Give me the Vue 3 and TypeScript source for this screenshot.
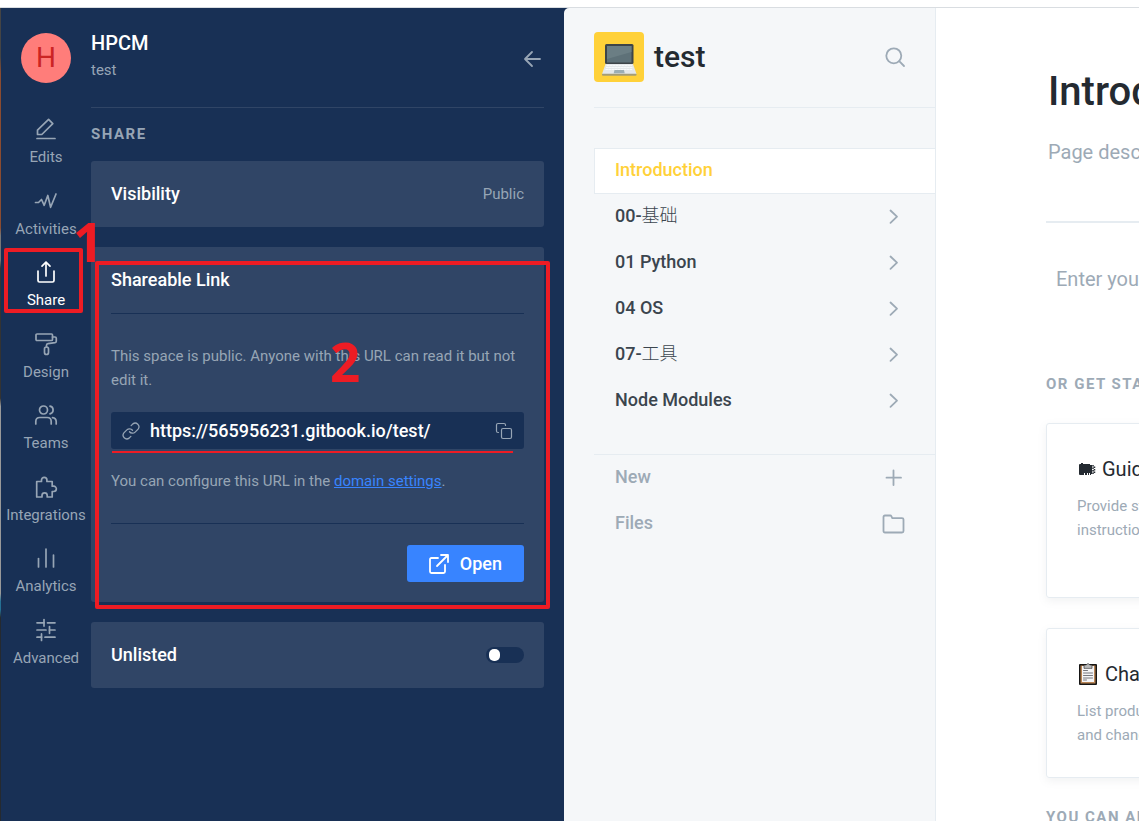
<script setup lang="ts">
import { ref } from 'vue'

interface RailItem {
  label: string
  paths: string[]
  active?: boolean
}

interface Page {
  name: string
  cjk?: string
}

const railItems: RailItem[] = [
  { label: 'Edits', paths: ['M3 21.500h18', 'M3.500 17.500v-4.300L14.600 2.400l4.200 4.200L7.800 17.500z'] },
  { label: 'Activities', paths: ['M1.500 13.500h3l3-3 2.700 5.800 3.600-9.800 2.800 11.800L22 5'] },
  { label: 'Share', active: true, paths: ['M12 16V2.500', 'M8 6.200l4-4 4 4', 'M4 11v9.500q0 1.500 1.500 1.500h13q1.500 0 1.500-1.500V11'] },
  {
    label: 'Design',
    paths: [
      'M3 2h14.500q1 0 1 1v4.500q0 1-1 1H3q-1 0-1-1V3q0-1 1-1z',
      'M18.500 5H21q1.300 0 1.300 1.300v2.900q0 1.300-1.300 1.500l-7 .9q-1.500.2-1.500 1.600v1.600',
      'M12.500 15q2 0 2 2v3.500q0 2-2 2t-2-2V17q0-2 2-2z',
    ],
  },
  {
    label: 'Teams',
    paths: [
      'M9.500 3a4 4 0 1 1 0 8 4 4 0 0 1 0-8z',
      'M1.800 21v-2.500q0-4 4-4h7.400q4 0 4 4V21',
      'M16 3.100a4 4 0 0 1 0 7.800',
      'M18.500 14.600q3.700.5 3.700 4V21',
    ],
  },
  {
    label: 'Integrations',
    paths: [
      'M2.700 6.500h4.800V5a2.700 2.700 0 0 1 5.400 0v1.500h5.300v4.700h1.500a2.500 2.500 0 0 1 0 5.300h-1.500V22h-5v-1.500a2.500 2.500 0 0 0-5.200 0V22H2.700z',
    ],
  },
  { label: 'Analytics', paths: ['M4.500 21v-8.500', 'M12 21V3', 'M19.500 21V9'] },
  {
    label: 'Advanced',
    paths: ['M3 4.800h7', 'M10 1.500v6.600', 'M13.500 4.800H21', 'M3 12h9', 'M15.500 8.700v6.600', 'M15.500 12H21', 'M3 19.200h4.500', 'M7.500 15.900v6.600', 'M11 19.200h10'],
  },
]

const pages: Page[] = [
  { name: '00-', cjk: '基础' },
  { name: '01 Python' },
  { name: '04 OS' },
  { name: '07-', cjk: '工具' },
  { name: 'Node Modules' },
]
const url = ref('https://565956231.gitbook.io/test/')
const unlisted = ref(false)
const description = ref('')
const body = ref('')
</script>

<template>
  <div class="window">
    <div class="topbar"></div>
    <div class="shell">
      <div class="edge"></div>

      <aside class="dock">
        <div class="rail">
          <div class="avatar">H</div>
          <nav class="rail-nav" aria-label="Space">
            <button
              v-for="item in railItems"
              :key="item.label"
              type="button"
              class="rail-item"
              :class="{ active: item.active }"
            >
              <svg class="rail-icon" viewBox="0 0 24 24" aria-hidden="true">
                <path v-for="d in item.paths" :key="d" :d="d" />
              </svg>
              <span>{{ item.label }}</span>
            </button>
          </nav>
        </div>

        <div class="panel">
          <header class="panel-head">
            <div>
              <h2 class="org">HPCM</h2>
              <p class="space">test</p>
            </div>
            <button type="button" class="icon-btn back" aria-label="Back">
              <svg width="24" height="24" viewBox="0 0 24 24"><path d="M20 12H5.500M12 5l-7 7 7 7" /></svg>
            </button>
          </header>

          <h3 class="section">Share</h3>

          <div class="cards">
            <section class="card row">
              <h4>Visibility</h4>
              <span class="value">Public</span>
            </section>

            <section class="card">
              <h4 id="link-title" class="card-title">Shareable Link</h4>
              <div class="card-body">
                <p>This space is public. Anyone with this URL can read it but not edit it.</p>
                <div class="url-box">
                  <svg class="link-icon" width="18" height="18" viewBox="0 0 24 24" aria-hidden="true">
                    <path d="M10 13a5 5 0 0 0 7.500.5l4-4a5 5 0 0 0-7-7l-2.300 2.300" />
                    <path d="M14 11a5 5 0 0 0-7.500-.5l-4 4a5 5 0 0 0 7 7l2.300-2.300" />
                  </svg>
                  <input v-model="url" type="text" readonly aria-labelledby="link-title" />
                  <button type="button" class="icon-btn copy" aria-label="Copy">
                    <svg width="18" height="18" viewBox="0 0 18 18">
                      <rect x="6.500" y="6.500" width="10" height="10" rx="1.500" />
                      <path d="M3.500 10.500h-.5q-1.500 0-1.500-1.500V3q0-1.500 1.500-1.500h6q1.500 0 1.500 1.500v.5" />
                    </svg>
                  </button>
                </div>
                <p>You can configure this URL in the <a href="#domain">domain settings</a>.</p>
              </div>
              <div class="card-foot">
                <button type="button" class="open">
                  <svg width="20" height="20" viewBox="0 0 20 20" aria-hidden="true">
                    <path d="M9 4H2.500Q1 4 1 5.500v12Q1 19 2.500 19h12q1.500 0 1.500-1.500V11" />
                    <path d="M8 12L18.500 1.500M12 1h7v7" />
                  </svg>
                  <span>Open</span>
                </button>
              </div>
            </section>

            <section class="card row">
              <h4><label for="unlisted">Unlisted</label></h4>
              <input id="unlisted" v-model="unlisted" type="checkbox" class="switch" />
            </section>
          </div>
        </div>
      </aside>

      <aside class="sidebar">
        <header class="side-head">
          <svg class="logo" viewBox="0 0 50 50" aria-hidden="true">
            <rect width="50" height="50" rx="4" fill="#ffd139" />
            <rect x="11" y="12" width="28.500" height="20" rx="1.500" fill="#3d4448" />
            <rect x="13" y="14" width="24.500" height="16.500" fill="#5e7178" />
            <path d="M13 14h24.500v6L13 27z" fill="#6b7e84" />
            <path d="M11.500 32h27.500l3.500 10H8z" fill="#e4e8ea" />
            <path d="M13 33.500h24.500M12.400 35.500h25.700M11.800 37.500h26.900" stroke="#f7f9fa" stroke-dasharray="2 1" />
            <path d="M20.500 38h9.500l.7 3.300H19.700z" fill="#9caeb5" />
            <path d="M8 41.700h34.500v1.200q0 .8-1 .8H9q-1 0-1-.8z" fill="#a59d76" />
          </svg>
          <h1 class="side-title">test</h1>
          <button type="button" class="icon-btn tool" aria-label="Search">
            <svg width="24" height="24" viewBox="0 0 24 24"><circle cx="10.800" cy="10.800" r="7.500" /><path d="M16.200 16.200L21 21" /></svg>
          </button>
        </header>

        <nav class="tree" aria-label="Pages">
          <a href="#introduction" class="tree-row current">Introduction</a>
          <a v-for="page in pages" :key="page.name" :href="'#' + page.name" class="tree-row">
            <span>{{ page.name }}<span v-if="page.cjk" class="cjk">{{ page.cjk }}</span></span>
            <svg width="24" height="24" viewBox="0 0 24 24" aria-hidden="true"><path d="M9.500 6.500l6.500 6.200-6.500 6.200" /></svg>
          </a>
        </nav>

        <div class="extras">
          <button type="button" class="tree-row extra">
            <span>New</span>
            <svg width="24" height="24" viewBox="0 0 24 24" aria-hidden="true"><path d="M12.500 5.500v14.500M5.500 12.700h14.500" /></svg>
          </button>
          <button type="button" class="tree-row extra">
            <span>Files</span>
            <svg width="24" height="24" viewBox="0 0 24 24" aria-hidden="true">
              <path d="M4 4.500h5.300q.7 0 1 .6l1 2H21q1.500 0 1.500 1.500v11.400q0 1.500-1.500 1.500H4q-1.500 0-1.500-1.500V6q0-1.500 1.500-1.500z" />
            </svg>
          </button>
        </div>
      </aside>

      <main class="page">
        <h1 class="page-title">Introduction</h1>
        <input v-model="description" class="field desc" type="text" placeholder="Page description (optional)" aria-label="Page description" />
        <input v-model="body" class="field content" type="text" placeholder="Enter your content here" aria-label="Content" />

        <h2 class="heading">Or get started with a template</h2>
        <div class="templates">
          <a href="#guides" class="template tall">
            <h3>
              <svg width="19" height="20" viewBox="0 0 19 20" aria-hidden="true">
                <path d="M2 6q0-1 1-1h1V4h2v1h7v1h2v9h-1v1h-1v-2h-1v2h-1v-2h-1v2H8v-2H7v2H3q-1 0-1-1z" fill="#242a31" />
                <path d="M16 6v10M17.500 7.500v7" stroke="#242a31" stroke-width="1.500" stroke-linecap="butt" stroke-dasharray="1.500 1" />
              </svg>
              Guides
            </h3>
            <p>Provide step-by-step<br />instructions</p>
          </a>
          <a href="#changelog" class="template">
            <h3>
              <svg width="22" height="24" viewBox="0 0 22 24" aria-hidden="true">
                <rect x="2" y="2" width="18" height="21" rx="1" fill="#151515" />
                <rect x="3.500" y="3.500" width="15" height="18" fill="#b98555" />
                <rect x="5" y="4" width="12" height="16" fill="#f5f5f7" />
                <path d="M7 6V3h2q2-3 4 0h2v3z" fill="#b9b9b9" stroke="#222" stroke-width=".6" />
                <path d="M6.500 8.500h4M6.500 11h9M6.500 13.500h9M6.500 16h9M6.500 18h3" stroke="#77777d" />
              </svg>
              Changelog
            </h3>
            <p>List product updates<br />and changes</p>
          </a>
        </div>
        <h2 class="heading also">You can also</h2>
      </main>
    </div>

    <div class="mark mark-share"></div>
    <div class="mark mark-link"></div>
    <div class="underline"></div>
    <span class="num one">1</span>
    <span class="num two">2</span>
  </div>
</template>

<style>
body {
  margin: 0;
  background: #fff;
}
</style>

<style scoped>
* {
  box-sizing: border-box;
}
.window {
  position: relative;
  display: flex;
  flex-direction: column;
  height: 100vh;
  overflow: hidden;
  font-family: Roboto, "Noto Sans CJK SC", sans-serif;
  font-size: 15px;
  color: #242a31;
}
h1, h2, h3, h4, p {
  margin: 0;
  font-weight: 400;
}
button {
  border: 0;
  padding: 0;
  background: none;
  font: inherit;
  color: inherit;
  cursor: pointer;
}
a {
  color: inherit;
  text-decoration: none;
}
svg {
  flex: none;
  fill: none;
  stroke-linecap: round;
  stroke-linejoin: round;
}
.topbar {
  flex: none;
  height: 8px;
  border-bottom: 1px solid #d9dde1;
}
.shell {
  flex: 1;
  min-height: 0;
  display: grid;
  grid-template-columns: 1px 563px 372px minmax(0, 1fr);
  background: #183055;
}
.edge {
  background: linear-gradient(#444 0 6%, #8a4b30 8% 27%, #777 28% 31%, #333 32% 48%, #999 49% 72%, #247094 73% 74%, #252a30 75%);
}
.dock {
  display: flex;
  color: #97a5b5;
}
.rail {
  flex: none;
  width: 90px;
  display: flex;
  flex-direction: column;
  align-items: center;
  gap: 34px;
  padding-top: 25px;
}
.avatar {
  width: 50px;
  height: 50px;
  border-radius: 50%;
  background: #ff7d7a;
  color: #cb2424;
  font-size: 28px;
  line-height: 50px;
  text-align: center;
}
.rail-nav {
  display: flex;
  flex-direction: column;
  gap: 20px;
}
.rail-item {
  display: flex;
  flex-direction: column;
  align-items: center;
  gap: 5px;
  line-height: 1.5;
}
.rail-icon {
  width: 24px;
  height: 24px;
  stroke: currentColor;
  stroke-width: 1.7;
}
.rail-item.active {
  color: #fff;
}
.panel {
  flex: 1;
  min-width: 0;
  padding-right: 20px;
}
.panel-head {
  display: flex;
  justify-content: space-between;
  height: 100px;
  padding-top: 20px;
  border-bottom: 1px solid #304566;
}
.org {
  color: #fff;
  font-size: 20px;
  font-weight: 500;
  line-height: 30px;
}
.space {
  line-height: 24px;
}
.icon-btn {
  display: flex;
  align-items: center;
  stroke: currentColor;
  stroke-width: 1.8;
}
.back {
  align-self: flex-start;
  margin-top: 19px;
}
.section {
  padding: 15px 0;
  font-size: 15px;
  font-weight: 700;
  line-height: 23px;
  letter-spacing: 0.1em;
  text-transform: uppercase;
}
.cards {
  display: flex;
  flex-direction: column;
  gap: 20px;
}
.card {
  padding: 20px;
  border-radius: 3px;
  background: #304566;
}
.card.row {
  display: flex;
  align-items: center;
  justify-content: space-between;
}
.card h4 {
  color: #fff;
  font-size: 18px;
  font-weight: 500;
  line-height: 26px;
}
.card .card-title {
  padding-bottom: 20px;
  border-bottom: 1px solid #183055;
}
.card-body {
  display: flex;
  flex-direction: column;
  gap: 20px;
  padding: 30px 0;
  line-height: 24px;
  border-bottom: 1px solid #183055;
}
.card-body a {
  color: #3884ff;
  text-decoration: underline;
}
.url-box {
  display: flex;
  align-items: center;
  gap: 10px;
  height: 37px;
  padding: 0 11px;
  border-radius: 3px;
  background: #183055;
}
.link-icon {
  stroke: currentColor;
  stroke-width: 1.7;
}
.url-box input {
  flex: 1;
  min-width: 0;
  padding: 0;
  border: 0;
  outline: 0;
  background: none;
  color: #fff;
  font: 500 18px/24px Roboto, sans-serif;
}
.copy {
  stroke-width: 1.2;
}
.card-foot {
  display: flex;
  justify-content: flex-end;
  padding-top: 21px;
}
.open {
  display: flex;
  align-items: center;
  gap: 11px;
  height: 37px;
  padding: 0 22px;
  border-radius: 3px;
  background: #3884ff;
  color: #fff;
  font-size: 18px;
  font-weight: 500;
}
.open svg {
  stroke: #fff;
  stroke-width: 1.8;
}
.switch {
  appearance: none;
  width: 38px;
  height: 16px;
  margin: 0;
  padding: 2px 3px;
  border-radius: 8px;
  background: #183055;
}
.switch::before {
  content: "";
  display: block;
  width: 11px;
  height: 12px;
  border-radius: 5px;
  background: #fff;
}
.switch:checked::before {
  margin-left: auto;
}
.sidebar {
  padding-left: 30px;
  border-right: 1px solid #e6ecf1;
  border-top-left-radius: 5px;
  background: #f5f7f9;
}
.side-head {
  display: flex;
  align-items: center;
  gap: 10px;
  height: 100px;
  padding: 0 28px 1px 0;
  border-bottom: 1px solid #e6ecf1;
}
.logo {
  width: 50px;
  height: 50px;
}
.side-title {
  flex: 1;
  font-size: 30px;
  font-weight: 500;
  line-height: 50px;
}
.tool {
  color: #9daab6;
}
.tree {
  padding: 40px 0 30px;
}
.tree-row {
  display: flex;
  align-items: center;
  justify-content: space-between;
  width: 100%;
  height: 46px;
  padding: 0 30px 2px 21px;
  color: #3b454e;
  font-size: 18px;
  font-weight: 500;
  line-height: 24px;
}
.tree-row svg {
  stroke: #9daab6;
  stroke-width: 1.8;
}
.cjk {
  font-weight: 300;
}
.current {
  padding-left: 20px;
  border: 1px solid #e6ecf1;
  border-right: 0;
  background: #fff;
  color: #ffd139;
}
.extras {
  border-top: 1px solid #e6ecf1;
}
.extra {
  color: #9daab6;
}
.page {
  padding: 54px 0 0 110px;
  overflow: hidden;
  white-space: nowrap;
  background: #fff;
}
.page-title {
  padding-left: 2px;
  font-size: 40px;
  font-weight: 500;
  line-height: 60px;
}
.field {
  display: block;
  width: 600px;
  border: 0;
  outline: 0;
  background: none;
  font: 400 20px/30px Roboto, sans-serif;
}
.field::placeholder {
  color: #9daab6;
  opacity: 1;
}
.desc {
  margin-top: 15px;
  padding: 0 0 54px 2px;
  border-bottom: 2px solid #e6ecf1;
}
.content {
  margin-top: 41px;
  padding: 0 10px;
}
.heading {
  margin-top: 78px;
  color: #9daab6;
  font-size: 15px;
  font-weight: 700;
  line-height: 24px;
  letter-spacing: 0.1em;
  text-transform: uppercase;
}
.templates {
  display: flex;
  flex-direction: column;
  gap: 30px;
  width: 260px;
  margin-top: 27px;
}
.template {
  padding: 30px;
  border: 1px solid #e6ecf1;
  border-radius: 3px;
  box-shadow: 0 3px 8px rgba(116, 129, 141, 0.1);
}
.template.tall {
  min-height: 175px;
}
.template h3 {
  display: flex;
  align-items: center;
  gap: 6px;
  margin-bottom: 10px;
  font-size: 20px;
  line-height: 30px;
}
.template p {
  color: #9daab6;
  line-height: 24px;
}
.also {
  margin-top: 27px;
}
.mark {
  position: absolute;
  border: 4px solid #ed1c24;
  border-radius: 2px;
  pointer-events: none;
}
.mark-share {
  left: 4px;
  top: 248px;
  width: 79px;
  height: 65px;
}
.mark-link {
  left: 95px;
  top: 261px;
  width: 455px;
  height: 348px;
}
.underline {
  position: absolute;
  left: 112px;
  top: 451px;
  width: 401px;
  height: 2px;
  background: #ed1c24;
}
.num {
  position: absolute;
  color: #ed1c24;
  font: 700 53px/54px "Open Sans", sans-serif;
  pointer-events: none;
}
.one {
  left: 73px;
  top: 215px;
}
.two {
  left: 330px;
  top: 335px;
}
</style>
